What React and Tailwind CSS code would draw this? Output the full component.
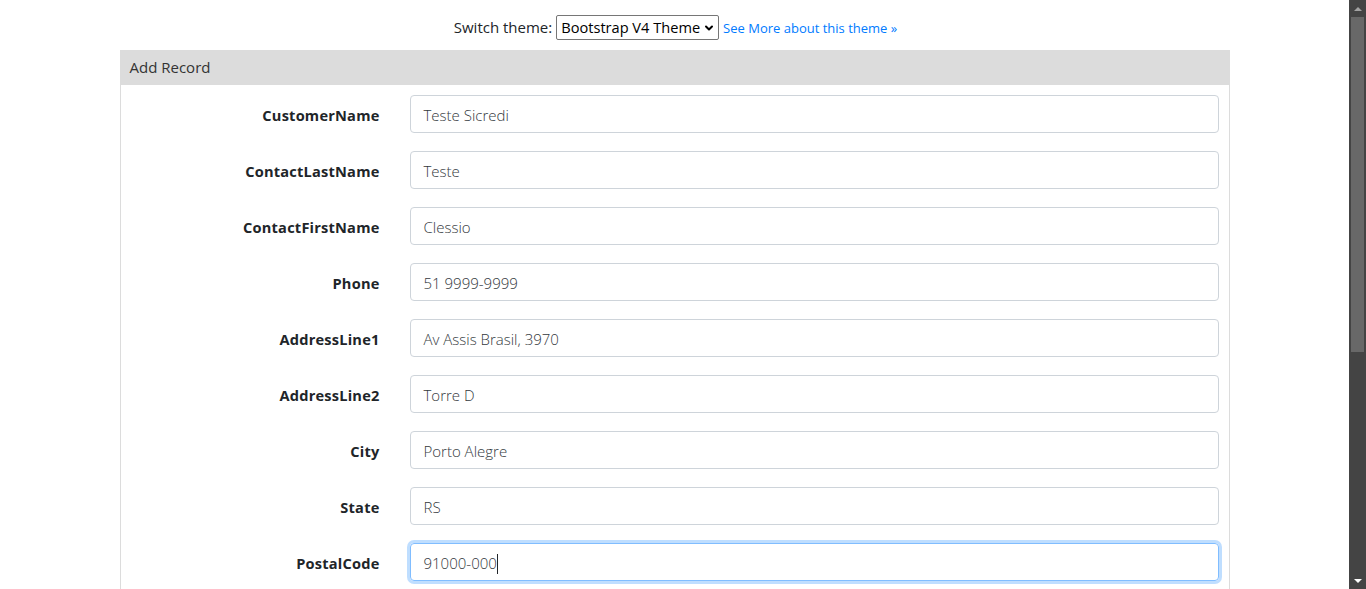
import { ChevronDown } from 'lucide-react'

const fields = [
  ['CustomerName', 'Teste Sicredi'],
  ['ContactLastName', 'Teste'],
  ['ContactFirstName', 'Clessio'],
  ['Phone', '51 9999-9999'],
  ['AddressLine1', 'Av Assis Brasil, 3970'],
  ['AddressLine2', 'Torre D'],
  ['City', 'Porto Alegre'],
  ['State', 'RS'],
  ['PostalCode', '91000-000'],
]

function Field({ label, value, focused }) {
  return (
    <div className="flex items-center h-[38px]">
      <div className="w-[289px] pr-[30px] pt-[4px] text-right text-[14.6px] font-bold text-[#212529] tracking-[0.2px]">{label}</div>
      <div
        className={
          focused
            ? 'flex-1 h-[38px] flex items-center pl-[13px] pt-[3px] rounded-[4px] border border-[#80bdff] shadow-[0_0_0_3px_rgba(0,123,255,0.25)] text-[15px] font-light text-[#33383d]'
            : 'flex-1 h-[38px] flex items-center pl-[13px] pt-[3px] rounded-[4px] border border-[#ced4da] text-[15px] font-light text-[#33383d]'
        }
      >
        {value}
        {focused && <span className="w-px h-[20px] bg-[#212529]"></span>}
      </div>
    </div>
  )
}

export default function App() {
  return (
    <div className="flex h-screen overflow-hidden bg-white font-['Open_Sans',sans-serif]">
      <div className="flex-1 flex flex-col items-center">
        <div className="h-[50px] flex items-center justify-center gap-1 pt-[5px] pl-[2px]">
          <span className="text-[15px] text-[#212529]">Switch theme:</span>
          <div className="h-[25px] flex items-center gap-[3px] pl-[4px] pr-[3px] border border-[#767676] rounded-[2px] text-[14.6px] text-black">
            Bootstrap V4 Theme
            <ChevronDown size={12} strokeWidth={4} />
          </div>
          <a className="text-[13px] text-[#007bff] pt-[2px]">See More about this theme »</a>
        </div>
        <div className="w-[1110px] flex-1 border-x border-[#dcdcdc]">
          <div className="h-[35px] flex items-center px-[9px] bg-[#dcdcdc] text-[15px] text-[#333]">Add Record</div>
          <div className="flex flex-col gap-[18px] pt-[10px] pr-[10px]">
            {fields.map(([l, v], i) => (
              <Field key={l} label={l} value={v} focused={i === fields.length - 1} />
            ))}
          </div>
        </div>
      </div>
      <div className="w-[17px] flex flex-col bg-[#444]">
        <div className="h-[17px] flex items-center justify-center">
          <div className="w-0 h-0 border-x-[4px] border-x-transparent border-b-[4px] border-b-[#a3a3a3]"></div>
        </div>
        <div className="mx-[2px] h-[335px] bg-[#686868]"></div>
        <div className="flex-1"></div>
        <div className="h-[17px] flex items-center justify-center">
          <div className="w-0 h-0 border-x-[4px] border-x-transparent border-t-[4px] border-t-white"></div>
        </div>
      </div>
    </div>
  )
}
